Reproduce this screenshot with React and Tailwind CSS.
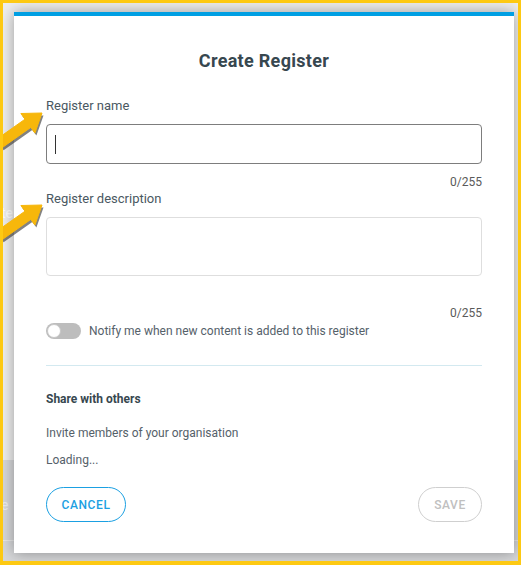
import React from "react";

function Arrow({ className }) {
  const d = "M42 12 L20.9 12.5 L25 18.2 L-3.7 38.5 L2.1 46.7 L30.8 26.4 L34.9 32.1 Z";
  return (
    <svg className={className} width="50" height="52" viewBox="0 0 50 52">
      <path d={d} transform="translate(1.5,2.5)" fill="#2e2e2e" opacity="0.6" strokeLinejoin="round" />
      <path d={d} fill="#f7b70b" stroke="#f7b70b" strokeWidth="1" strokeLinejoin="round" />
    </svg>
  );
}

export default function App() {
  const font = { fontFamily: "Roboto, 'Noto Sans', sans-serif" };
  return (
    <div
      className="relative w-[521px] h-[565px] overflow-hidden border-t-[3px] border-l-[3px] border-r-[3px] border-b-[4px] border-[#fdc913] bg-[#eeeeee]"
      style={font}
    >
      {/* backdrop bits */}
      <div className="absolute left-0 right-0 top-[457px] bottom-0 bg-[#d6d7d9]">
        <div className="mt-[80px] h-px bg-[#e8e8e8]" />
      </div>
      <div className="absolute left-[-2px] top-[200px] text-[14px] text-[#ffffff]">te</div>
      <div className="absolute left-[-2px] top-[492px] text-[14px] text-[#eeeeee]">e</div>

      <div className="absolute left-[11px] top-[9px] w-[500px] h-[541px] bg-white shadow-[0_0_14px_rgba(0,0,0,0.35)] flex flex-col">
        <div className="h-[4px] bg-[#009fe3]" />
        <div className="px-[32px] pt-[32px] flex flex-col">
          <h1 className="text-center text-[18px] leading-[24px] font-bold text-[#37474f] tracking-[0.3px] translate-y-[1px]">
            Create Register
          </h1>

          <label className="mt-[25px] text-[13px] leading-[18px] text-[#4a5862]">Register name</label>
          <div className="mt-[9px] h-[40px] rounded-[4px] border border-[#7d7d7d] flex items-center pl-[8px]">
            <div className="w-px h-[19px] bg-[#333]" />
          </div>
          <div className="mt-[10px] text-right text-[12px] leading-[16px] text-[#5a5a5a]">0/255</div>

          <label className="text-[13px] leading-[18px] text-[#4a5862]">Register description</label>
          <div className="mt-[9px] h-[59px] rounded-[4px] border border-[#dedede]" />
          <div className="mt-[29px] text-right text-[12px] leading-[16px] text-[#5a5a5a]">0/255</div>

          <div className="mt-[2px] flex items-center gap-[8px] h-[16px]">
            <div className="relative w-[35px] h-[16px] rounded-full bg-[#bdbdbd]">
              <div className="absolute left-[1px] top-[1px] w-[14px] h-[14px] rounded-full bg-white border border-[#c8c8c8]" />
            </div>
            <span className="text-[12px] leading-[16px] text-[#55616a]">
              Notify me when new content is added to this register
            </span>
          </div>

          <div className="mt-[26px] h-px bg-[#d3e9f0]" />

          <div className="mt-[25px] text-[12px] leading-[16px] font-bold text-[#37474f]">Share with others</div>
          <div className="mt-[18px] text-[12px] leading-[16px] text-[#55616a]">Invite members of your organisation</div>
          <div className="mt-[11px] text-[12px] leading-[16px] text-[#55616a]">Loading...</div>

          <div className="mt-[19px] flex justify-between">
            <button className="w-[80px] h-[35px] rounded-full border border-[#1ba0e2] text-[#1ba0e2] text-[12px] font-medium tracking-[0.6px]">
              CANCEL
            </button>
            <button className="w-[64px] h-[35px] rounded-full border border-[#cfcfcf] text-[#c0c0c0] text-[12px] font-medium tracking-[0.6px]">
              SAVE
            </button>
          </div>
        </div>
      </div>

      <Arrow className="absolute left-[-3px] top-[98px]" />
      <Arrow className="absolute left-[-3px] top-[190px]" />
    </div>
  );
}
